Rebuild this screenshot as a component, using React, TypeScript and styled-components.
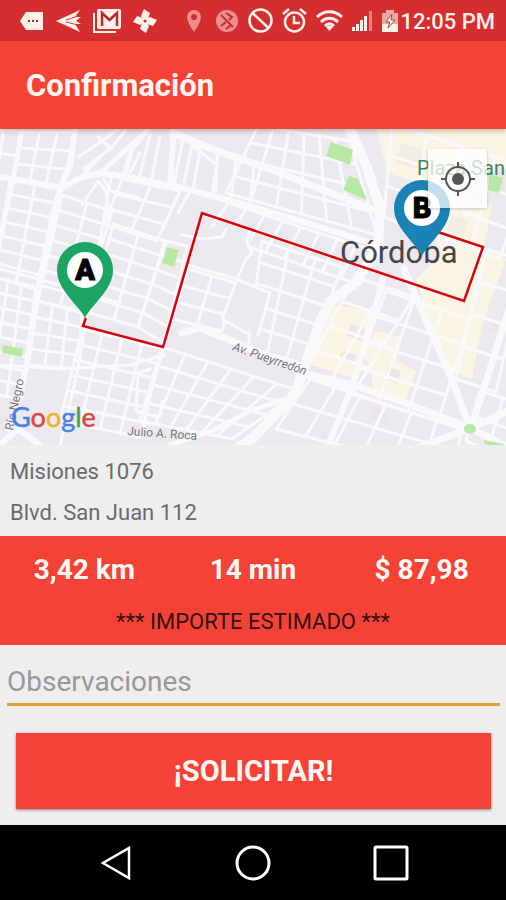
import React from "react";
import styled, { createGlobalStyle } from "styled-components";

const GlobalStyle = createGlobalStyle`
  *, *::before, *::after { box-sizing: border-box; }
  body { margin: 0; background: #eeeeee; font-family: Roboto, "Liberation Sans", sans-serif; }
  button, input { font: inherit; }
`;

const Screen = styled.div`
  display: flex;
  flex-direction: column;
  min-height: 100vh;
  background: #eeeeee;
`;

const StatusBar = styled.div`
  display: flex;
  align-items: center;
  justify-content: space-between;
  height: 41px;
  padding: 0 11px 0 20px;
  background: #d52e30;
  color: #fff0ea;
`;

const IconGroup = styled.div<{ $gap: number }>`
  display: flex;
  align-items: center;
  gap: ${(p) => p.$gap}px;
`;

const Glyph = styled.svg<{ $faded?: boolean }>`
  display: block;
  flex: none;
  opacity: ${(p) => (p.$faded ? 0.5 : 1)};
`;

const PowerAndTime = styled.div`
  display: flex;
  align-items: center;
  gap: 2px;
`;

const Clock = styled.time`
  padding-top: 2px;
  font-size: 22px;
  line-height: 28px;
  font-weight: 500;
  white-space: nowrap;
`;

const AppBar = styled.header`
  position: relative;
  z-index: 1;
  display: flex;
  align-items: center;
  height: 88px;
  padding: 2px 26px 0;
  background: #f44336;
  box-shadow: 0 2px 5px rgba(0, 0, 0, 0.25);
`;

const Title = styled.h1`
  margin: 0;
  color: #fff4ee;
  font-size: 31px;
  line-height: 40px;
  font-weight: 700;
`;

const MapArea = styled.section`
  position: relative;
  overflow: hidden;
`;

const MapDrawing = styled.svg`
  display: block;
  width: 100%;
  height: auto;
`;

const LocateButton = styled.button`
  position: absolute;
  top: 20px;
  right: 19px;
  display: grid;
  place-items: center;
  width: 59px;
  height: 59px;
  padding: 0;
  border: 0;
  background: rgba(255, 255, 255, 0.74);
  box-shadow: 0 1px 3px rgba(0, 0, 0, 0.2);
  color: #555555;
`;

const Addresses = styled.address`
  display: flex;
  flex-direction: column;
  gap: 11px;
  padding: 12px 10px 8px;
  color: #6b6b6b;
  font-size: 22px;
  line-height: 30px;
  font-style: normal;
`;

const Summary = styled.section`
  padding: 16px 0 8px;
  background: #f44336;
`;

const Figures = styled.div`
  display: grid;
  grid-template-columns: repeat(3, 1fr);
`;

const Figure = styled.strong`
  color: #fff8f4;
  font-size: 28px;
  line-height: 36px;
  font-weight: 700;
  text-align: center;
`;

const Note = styled.p`
  margin: 19px 0 0;
  color: #35110e;
  font-size: 22px;
  line-height: 30px;
  text-align: center;
`;

const Form = styled.form`
  display: flex;
  flex-direction: column;
  gap: 27px;
  padding: 14px 6px 16px 7px;
`;

const Observations = styled.input`
  width: 100%;
  height: 47px;
  padding: 0;
  border: 0;
  border-bottom: 3px solid #e7a02e;
  border-radius: 0;
  outline: 0;
  background: transparent;
  color: #333333;
  font-size: 28px;
  &::placeholder { color: #989898; opacity: 1; }
`;

const SubmitButton = styled.button`
  height: 76px;
  margin: 0 9px;
  border: 0;
  background: #f44336;
  box-shadow: 0 1px 3px rgba(0, 0, 0, 0.45);
  color: #fff8f4;
  font-size: 29px;
  font-weight: 700;
`;

const NavBar = styled.nav`
  display: flex;
  align-items: center;
  justify-content: center;
  gap: 78px;
  height: 75px;
  margin-top: auto;
  background: #000000;
`;

const NavButton = styled.button`
  display: grid;
  place-items: center;
  width: 60px;
  height: 60px;
  padding: 0;
  border: 0;
  background: transparent;
  color: #ffffff;
`;

type Point = [number, number];
type Quad = { corners: [Point, Point, Point, Point]; cols: number; rows: number };

const mix = (a: Point, b: Point, t: number): Point => [
  a[0] + (b[0] - a[0]) * t,
  a[1] + (b[1] - a[1]) * t,
];

/* Corners run clockwise from the top left. */
function streets({ corners: [a, b, c, d], cols, rows }: Quad): string {
  const parts: string[] = [];
  const line = (p: Point, q: Point) => parts.push(`M${p.join(" ")}L${q.join(" ")}`);
  for (let i = 0; i <= cols; i++) line(mix(a, b, i / cols), mix(d, c, i / cols));
  for (let j = 0; j <= rows; j++) line(mix(a, d, j / rows), mix(b, c, j / rows));
  return parts.join("");
}

const neighbourhoods: Quad[] = [
  { corners: [[-14, -2], [22, 3], [13, 51], [-20, 45]], cols: 2, rows: 2 },
  { corners: [[22, 3], [75, 3], [62, 59], [13, 51]], cols: 3, rows: 3 },
  { corners: [[10, 51], [60, 60], [38, 161], [-6, 148]], cols: 2, rows: 7 },
  { corners: [[-6, 148], [36, 158], [22, 270], [-24, 262]], cols: 3, rows: 8 },
  { corners: [[62, 66], [112, 82], [82, 182], [38, 172]], cols: 2, rows: 7 },
  { corners: [[38, 172], [82, 184], [78, 240], [28, 236]], cols: 3, rows: 4 },
  { corners: [[122, 50], [180, 62], [157, 112], [104, 95]], cols: 2, rows: 3 },
  { corners: [[113, 95], [165, 112], [138, 198], [90, 184]], cols: 2, rows: 6 },
  { corners: [[166, 112], [187, 117], [164, 214], [138, 198]], cols: 1, rows: 6 },
  { corners: [[82, 200], [162, 220], [140, 308], [60, 292]], cols: 4, rows: 6 },
  { corners: [[188, 140], [236, 154], [222, 202], [172, 190]], cols: 2, rows: 3 },
  { corners: [[162, 218], [300, 262], [232, 310], [140, 292]], cols: 6, rows: 4 },
  { corners: [[183, 10], [254, 37], [250, 76], [174, 55]], cols: 4, rows: 1 },
  { corners: [[258, -3], [350, 12], [377, 106], [226, 64]], cols: 6, rows: 4 },
  { corners: [[228, 74], [374, 122], [360, 156], [208, 104]], cols: 8, rows: 2 },
  { corners: [[262, 112], [342, 138], [306, 236], [248, 218]], cols: 3, rows: 5 },
  { corners: [[355, 148], [414, 168], [354, 263], [304, 246]], cols: 2, rows: 4 },
  { corners: [[386, 162], [470, 190], [438, 292], [348, 264]], cols: 3, rows: 4 },
  { corners: [[486, 120], [526, 132], [496, 263], [456, 250]], cols: 1, rows: 4 },
  { corners: [[310, 250], [462, 300], [452, 345], [276, 300]], cols: 6, rows: 2 },
  { corners: [[480, 262], [526, 276], [510, 330], [466, 312]], cols: 2, rows: 2 },
  { corners: [[392, -5], [530, 40], [500, 130], [384, 88]], cols: 4, rows: 3 },
];

const minorStreets = [
  "M78 28L105 10L118 0M84 40L112 18L125 2M78 52L100 28M98 8L112 20",
  "M140 46L150 6M130 44L140 24M152 48L160 8M192 16L184 54M217 23L216 62M192 16L217 36",
  "M82 76L98 52L106 62L108 80M104 50L110 62L138 68M178 84L190 62",
];

const mediumStreets = [
  "M182 106L205 110L222 108L226 100",
  "M250 100L247 114L252 124L246 130L238 148L222 190L250 206",
  "M188 136L236 150L270 164L258 206",
  "M0 236L60 240L130 236L164 226",
  "M112 44L104 88L78 240L60 316",
  "M164 218L150 262L144 300",
  "M0 140L38 150L120 174",
  "M138 244L150 240M138 244L136 282L160 288L162 272",
];

const avenues: { d: string; width: number }[] = [
  { d: "M22 0L17 30L10 63L3 96L-4 134", width: 5 },
  { d: "M75 0L70 36L60 60L53 86L46 120L38 161L33 190L27 236L18 272L8 300", width: 6 },
  { d: "M0 48L20 51L62 59L80 49L100 44L133 49L183 59L253 78L300 92L378 116", width: 6 },
  { d: "M148 0L132 20L124 48M142 6L116 30L98 46", width: 5 },
  { d: "M174 0L170 54", width: 6 },
  { d: "M173 4L217 22L253 34L303 53L372 80", width: 7 },
  { d: "M348 -4L366 36L380 79L378 120L353 156L330 173L320 193L306 233L296 262L286 275L253 309L236 320", width: 10 },
  { d: "M383 150L366 213L350 263L328 316", width: 6 },
  { d: "M404 140L424 186L453 253L470 299", width: 7 },
  { d: "M182 204L200 199L232 212L310 246L353 256L403 273L470 299L512 320", width: 7 },
  { d: "M512 170L486 253L471 299L512 280M471 299L420 318", width: 7 },
  { d: "M170 316L212 302L250 282L286 270", width: 5 },
  { d: "M0 316L18 300L40 316", width: 6 },
];

const brandLetters: [string, string][] = [
  ["G", "#4a80e8"],
  ["o", "#dc4a40"],
  ["o", "#efb625"],
  ["g", "#4a80e8"],
  ["l", "#43a35a"],
  ["e", "#dc4a40"],
];

function StreetMap() {
  return (
    <MapDrawing viewBox="0 0 506 316" role="img" aria-label="Mapa del recorrido">
      <rect width="506" height="316" fill="#ebe9ed" />
      <g fill="#f9f4e4">
        <path d="M376 0L506 0L506 40L470 34L440 60L388 44Z" />
        <path d="M440 60L492 76L484 118L506 130L482 196L472 250L446 240L424 176L416 150L436 130Z" />
        <path d="M334 176L372 182L358 250L312 236L322 194Z" />
        <path d="M376 202L402 208L396 232L416 242L404 276L374 268L370 236L362 226Z" />
      </g>
      <g fill="#eae5e6">
        <path d="M351 195l14 5-4 12-14-5zM342 222l15 4-4 9-14-4zM388 238l13 4-4 12-12-4zM492 190l14 4-4 13-13-4zM374 278l15 4-4 13-13-4z" />
        <path d="M402 14l24 7-7 20-24-8zM452 86l16 5-5 15-16-5zM492 44l16 5-5 18-16-5z" opacity=".5" />
      </g>
      <g fill="none" stroke="#f9f8fb" strokeLinejoin="round" strokeLinecap="round">
        <g strokeWidth="3">
          {neighbourhoods.map((quad, index) => (
            <path key={index} d={streets(quad)} />
          ))}
          {minorStreets.map((d) => (
            <path key={d} d={d} />
          ))}
        </g>
        <g fill="#ebe9ed" stroke="none">
          <path d="M201 98L250 99L250 128L238 148L188 136Z" />
          <path d="M238 148L270 164L260 206L222 190Z" />
        </g>
        <g strokeWidth="3">
          {mediumStreets.map((d) => (
            <path key={d} d={d} />
          ))}
        </g>
        {avenues.map(({ d, width }) => (
          <path key={d} d={d} strokeWidth={width} />
        ))}
      </g>
      <g fill="#b9e8a4">
        <path d="M167 118L179 121L174 138L162 134Z" />
        <path d="M331 13L353 21L350 36L326 27Z" />
        <path d="M349 47L358 50L367 71L343 61Z" />
        <path d="M3 216L23 220L22 228L2 224Z" />
        <path d="M489 45L503 49L499 64L488 61Z" />
        <ellipse cx="470" cy="300" rx="6" ry="5" />
        <path d="M484 311L504 315V316H485Z" />
      </g>

      <path
        d="M86 189L83 197L163 218L202 84L464 172L483 118L438 103"
        fill="none"
        stroke="#d4040c"
        strokeWidth="2.5"
      />

      <g fontFamily='Roboto, "Liberation Sans", sans-serif'>
        <text x="417" y="46" fontSize="20" fill="#388653">Plaza San</text>
        <text x="340" y="134" fontSize="31" fill="#454548">Córdoba</text>
        <text transform="translate(232 221) rotate(19)" fontSize="12" fontStyle="italic" fill="#77777b">Av. Pueyrredón</text>
        <text transform="translate(127 306) rotate(4)" fontSize="12" fill="#77777b">Julio A. Roca</text>
        <text transform="translate(13 302) rotate(-78)" fontSize="12" fill="#77777b">Río Negro</text>
      </g>

      <Marker x={85} y={141} colour="#1ba463" letter="A" />
      <Marker x={422} y={79} colour="#1a83b5" letter="B" />

      <text x="11" y="298" fontFamily="Lato, sans-serif" fontSize="27" strokeWidth=".5">
        {brandLetters.map(([letter, colour], index) => (
          <tspan key={index} fill={colour} stroke={colour}>{letter}</tspan>
        ))}
      </text>
    </MapDrawing>
  );
}

type MarkerProps = { x: number; y: number; colour: string; letter: string };

function Marker({ x, y, colour, letter }: MarkerProps) {
  return (
    <g transform={`translate(${x} ${y})`}>
      <path d="M0 48C-7 34 -28 20 -28 0A28 28 0 0 1 28 0C28 20 7 34 0 48Z" fill={colour} />
      <circle r="18" fill="#ffffff" />
      <text
        y="10"
        textAnchor="middle"
        fontFamily='Roboto, "Liberation Sans", sans-serif'
        fontSize="29"
        fontWeight="900"
        fill="#050505"
        stroke="#050505"
        strokeWidth="1"
      >
        {letter}
      </text>
    </g>
  );
}

function NotificationIcons() {
  return (
    <IconGroup $gap={12}>
      <Glyph width="24" height="24" viewBox="0 0 24 24" aria-hidden="true">
        <path d="M6 3H23V21H6L0 12Z" fill="currentColor" />
        <path d="M8 11h2v2H8zM12 11h2v2h-2zM16 11h2v2h-2z" fill="#8c2c2c" />
      </Glyph>
      <Glyph width="25" height="24" viewBox="0 0 25 24" aria-hidden="true">
        <path d="M0 12L24 1L19 8L25 8L20 12L25 15L19 15L24 23Z" fill="currentColor" />
        <path d="M10 11L22 7M10 13L22 16" stroke="#c44" fill="none" />
      </Glyph>
      <Glyph width="28" height="26" viewBox="0 0 28 26" aria-hidden="true">
        <path d="M1 5V24H23" fill="none" stroke="currentColor" strokeWidth="2" />
        <rect x="4" y="1" width="24" height="20" rx="2" fill="currentColor" />
        <path d="M9 18V5L16.500 12L24 5V18" fill="none" stroke="#b52c2c" strokeWidth="2.500" />
      </Glyph>
      <Glyph width="24" height="24" viewBox="0 0 24 24" aria-hidden="true">
        <g fill="currentColor">
          {[0, 90, 180, 270].map((angle) => (
            <path key={angle} d="M12 13L8 7L11 0L17 4L15 10Z" transform={`rotate(${angle} 12 12)`} />
          ))}
        </g>
        <circle cx="12" cy="12" r="1.500" fill="#d52e30" />
      </Glyph>
    </IconGroup>
  );
}

function SystemIcons() {
  return (
    <IconGroup $gap={9}>
      <Glyph $faded width="20" height="24" viewBox="0 0 20 24" aria-hidden="true">
        <path d="M8 1A7 7 0 0 0 1 8C1 13 8 23 8 23S15 13 15 8A7 7 0 0 0 8 1ZM8 5A3 3 0 1 1 8 11A3 3 0 0 1 8 5Z" fill="currentColor" fillRule="evenodd" />
      </Glyph>
      <Glyph $faded width="24" height="24" viewBox="0 0 24 24" aria-hidden="true">
        <circle cx="12" cy="12" r="11" fill="currentColor" />
        <path d="M6 6L18 18M11 4L17 8L14 11M11 20L16 16M6 17L11 13" fill="none" stroke="#b9282c" strokeWidth="2" />
      </Glyph>
      <Glyph width="25" height="25" viewBox="0 0 25 25" aria-hidden="true">
        <g fill="none" stroke="currentColor" strokeWidth="2.500">
          <circle cx="12.500" cy="12.500" r="11" />
          <path d="M4.500 5L20.500 20" />
        </g>
      </Glyph>
      <Glyph width="25" height="25" viewBox="0 0 25 25" aria-hidden="true">
        <g fill="none" stroke="currentColor" strokeWidth="2.500">
          <circle cx="12.500" cy="14" r="9.500" />
          <path d="M12 8V15H18M1 6L7 1M24 6L18 1" />
        </g>
      </Glyph>
      <Glyph width="27" height="24" viewBox="0 0 27 24" aria-hidden="true">
        <g fill="none" stroke="currentColor" strokeWidth="3">
          <path d="M1 8C8 1 19 1 26 8M5 13C10 8 17 8 22 13M9 17C12 14 15 14 18 17" />
        </g>
        <path d="M10 18Q13.500 15 17 18L13.500 22Z" fill="currentColor" />
      </Glyph>
      <Glyph width="21" height="24" viewBox="0 0 21 24" aria-hidden="true">
        <g fill="currentColor">
          <path d="M0 18h3v4H0zM4 15h3v7H4zM8 11h3v11H8zM12 7h3v15h-3z" />
          <path d="M17 2h3v20h-3z" opacity=".45" />
        </g>
      </Glyph>
      <PowerAndTime>
        <Glyph width="16" height="24" viewBox="0 0 16 24" aria-hidden="true">
          <path d="M4 1H12V4H16V23H0V4H4Z" fill="#e9aaa5" />
          <path d="M0 15H16V23H0Z" fill="currentColor" />
          <path d="M10 5L4 13H8L6 19L13 11H9Z" fill="#ffffff" stroke="#8b5552" strokeWidth="1" />
        </Glyph>
        <Clock dateTime="12:05">12:05 PM</Clock>
      </PowerAndTime>
    </IconGroup>
  );
}

export default function App() {
  return (
    <Screen>
      <GlobalStyle />
      <StatusBar>
        <NotificationIcons />
        <SystemIcons />
      </StatusBar>
      <AppBar>
        <Title>Confirmación</Title>
      </AppBar>
      <main>
        <MapArea>
          <StreetMap />
          <LocateButton type="button" aria-label="Mi ubicación">
            <Glyph width="34" height="34" viewBox="0 0 34 34" aria-hidden="true">
              <circle cx="17" cy="17" r="6" fill="currentColor" />
              <g fill="none" stroke="currentColor" strokeWidth="2">
                <circle cx="17" cy="17" r="12" />
                <path d="M17 0V6M17 28V34M0 17H6M28 17H34" />
              </g>
            </Glyph>
          </LocateButton>
        </MapArea>
        <Addresses>
          <span>Misiones 1076</span>
          <span>Blvd. San Juan 112</span>
        </Addresses>
        <Summary>
          <Figures>
            <Figure>3,42 km</Figure>
            <Figure>14 min</Figure>
            <Figure>$ 87,98</Figure>
          </Figures>
          <Note>*** IMPORTE ESTIMADO ***</Note>
        </Summary>
        <Form onSubmit={(event) => event.preventDefault()}>
          <Observations type="text" placeholder="Observaciones" aria-label="Observaciones" />
          <SubmitButton type="submit">¡SOLICITAR!</SubmitButton>
        </Form>
      </main>
      <NavBar>
        <NavButton type="button" aria-label="Atrás">
          <Glyph width="36" height="36" viewBox="0 0 36 36" aria-hidden="true">
            <path d="M32 3V33L6 18Z" fill="none" stroke="currentColor" strokeWidth="2.500" />
          </Glyph>
        </NavButton>
        <NavButton type="button" aria-label="Inicio">
          <Glyph width="36" height="36" viewBox="0 0 36 36" aria-hidden="true">
            <circle cx="18" cy="18" r="16" fill="none" stroke="currentColor" strokeWidth="3" />
          </Glyph>
        </NavButton>
        <NavButton type="button" aria-label="Recientes">
          <Glyph width="36" height="36" viewBox="0 0 36 36" aria-hidden="true">
            <rect x="2" y="2" width="32" height="32" rx="1" fill="none" stroke="currentColor" strokeWidth="3" />
          </Glyph>
        </NavButton>
      </NavBar>
    </Screen>
  );
}
